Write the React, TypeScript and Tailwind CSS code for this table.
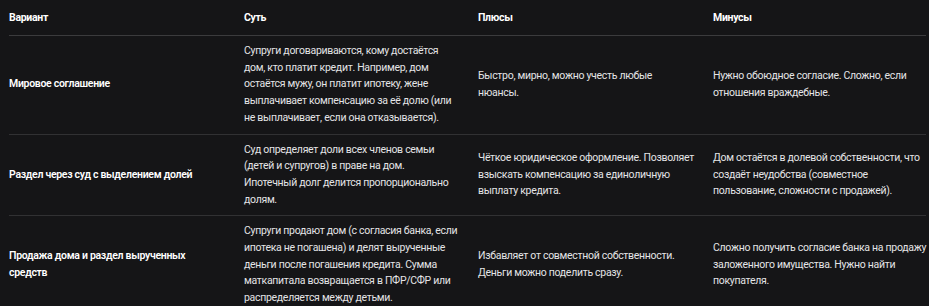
import React from 'react';

type Row = { variant: string[]; essence: string[]; pros: string[]; cons: string[] };

// строки разбиты так же, как в исходной таблице
const ROWS: Row[] = [
  {
    variant: ['Мировое соглашение'],
    essence: [
      'Супруги договариваются, кому достаётся',
      'дом, кто платит кредит. Например, дом',
      'остаётся мужу, он платит ипотеку, жене',
      'выплачивает компенсацию за её долю (или',
      'не выплачивает, если она отказывается).',
    ],
    pros: ['Быстро, мирно, можно учесть любые', 'нюансы.'],
    cons: ['Нужно обоюдное согласие. Сложно, если', 'отношения враждебные.'],
  },
  {
    variant: ['Раздел через суд с выделением долей'],
    essence: [
      'Суд определяет доли всех членов семьи',
      '(детей и супругов) в праве на дом.',
      'Ипотечный долг делится пропорционально',
      'долям.',
    ],
    pros: ['Чёткое юридическое оформление. Позволяет', 'взыскать компенсацию за единоличную', 'выплату кредита.'],
    cons: [
      'Дом остаётся в долевой собственности, что',
      'создаёт неудобства (совместное',
      'пользование, сложности с продажей).',
    ],
  },
  {
    variant: ['Продажа дома и раздел вырученных', 'средств'],
    essence: [
      'Супруги продают дом (с согласия банка, если',
      'ипотека не погашена) и делят вырученные',
      'деньги после погашения кредита. Сумма',
      'маткапитала возвращается в ПФР/СФР или',
      'распределяется между детьми.',
    ],
    pros: ['Избавляет от совместной собственности.', 'Деньги можно поделить сразу.'],
    cons: ['Сложно получить согласие банка на продажу', 'заложенного имущества. Нужно найти', 'покупателя.'],
  },
];

const cols = 'grid grid-cols-[235px_234px_235px_1fr]';

const Lines: React.FC<{ lines: string[] }> = ({ lines }) => (
  <>
    {lines.map((l) => (
      <div key={l} className="whitespace-nowrap">{l}</div>
    ))}
  </>
);

export default function App() {
  return (
    <div
      className="h-[306px] w-[929px] overflow-hidden bg-[#151517] pl-[9px] pr-[3px] text-[10.5px] tracking-[-0.3px] text-[#e4e4e6]"
      style={{ fontFamily: 'Roboto, "Noto Sans", sans-serif' }}
    >
      <div className={`${cols} border-b border-[#3b3b3d] font-bold text-white`}>
        <div className="py-[11px] leading-[13px]">Вариант</div>
        <div className="py-[11px] leading-[13px]">Суть</div>
        <div className="py-[11px] leading-[13px]">Плюсы</div>
        <div className="py-[11px] leading-[13px]">Минусы</div>
      </div>
      {ROWS.map((r, i) => (
        <div
          key={i}
          className={`${cols} items-center leading-[16.7px] ${i < ROWS.length - 1 ? 'border-b border-[#313133]' : ''}`}
        >
          <div className="font-semibold text-white">
            <Lines lines={r.variant} />
          </div>
          <div className="py-[7px]">
            <Lines lines={r.essence} />
          </div>
          <div>
            <Lines lines={r.pros} />
          </div>
          <div>
            <Lines lines={r.cons} />
          </div>
        </div>
      ))}
    </div>
  );
}
